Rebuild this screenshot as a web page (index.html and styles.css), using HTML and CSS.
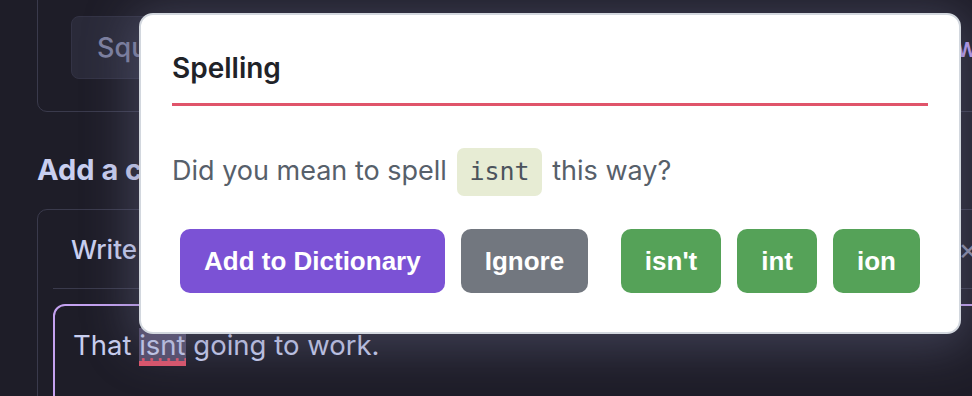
FILE: index.html
```html
<!DOCTYPE html>
<html lang="en">
<head>
<meta charset="utf-8">
<title>Spelling</title>
<link rel="stylesheet" href="styles.css">
</head>
<body>
<div class="page">
  <section class="card card-top">
    <div class="toolbar">
      <button class="ghost-btn">Square</button>
      <span class="link">Preview</span>
    </div>
  </section>
  <h2 class="section-title">Add a comment</h2>
  <section class="card editor">
    <div class="tabs">
      <span class="tab">Write</span>
      <span class="close">×</span>
    </div>
    <div class="textarea">That <span class="misspelled">isnt</span> going to work.</div>
  </section>
</div>

<div class="popup">
  <h3 class="popup-title">Spelling</h3>
  <p class="popup-text">Did you mean to spell <code class="word">isnt</code> this way?</p>
  <div class="actions">
    <div class="group">
      <button class="btn btn-purple">Add to Dictionary</button>
      <button class="btn btn-gray">Ignore</button>
    </div>
    <div class="group">
      <button class="btn btn-green">isn't</button>
      <button class="btn btn-green">int</button>
      <button class="btn btn-green">ion</button>
    </div>
  </div>
</div>
</body>
</html>
```

FILE: styles.css
```css
html, body {
  margin: 0;
  padding: 0;
  overflow: hidden;
}
body {
  background: #1e1d28;
  font-family: Inter, "Noto Sans", sans-serif;
  width: 972px;
  height: 396px;
  position: relative;
}
.page {
  width: 975px;
  padding-left: 37px;
  margin-top: -20px;
}
.card {
  border: 1px solid #3a3a4c;
  border-radius: 10px;
}
.card-top {
  padding: 35px 33px 32px 33px;
}
.toolbar {
  display: flex;
  justify-content: space-between;
  align-items: center;
}
.ghost-btn {
  height: 63px;
  padding: 0 25px;
  background: #2a2a39;
  border: 1px solid #333345;
  border-radius: 8px;
  color: #7d80a0;
  font-family: Inter, sans-serif;
  font-size: 27px;
  font-weight: 500;
}
.link {
  color: #b99cf0;
  font-size: 26px;
  font-weight: 600;
}
.section-title {
  margin: 41px 0 22px 0;
  font-size: 29px;
  line-height: 34px;
  font-weight: 700;
  color: #c9cff0;
}
.editor {
  padding: 0 15px;
  height: 220px;
}
.tabs {
  height: 78px;
  display: flex;
  justify-content: space-between;
  align-items: center;
  padding: 0 18px;
  border-bottom: 1px solid #3a3a4c;
}
.tab {
  color: #c9cff0;
  font-size: 26px;
  font-weight: 500;
}
.close {
  color: #8a8ca6;
  font-size: 30px;
}
.textarea {
  margin-top: 15px;
  height: 140px;
  border: 2px solid #c4a2f0;
  border-radius: 12px;
  padding: 22px 18px;
  color: #c9cff0;
  font-size: 27.5px;
  line-height: 34px;
}
.misspelled {
  position: relative;
  background: #564e6b;
  box-shadow: inset 0 -5px 0 #e0556b;
  padding-bottom: 4px;
}
.misspelled::after {
  content: "";
  position: absolute;
  left: 0;
  right: 0;
  bottom: 5px;
  height: 3px;
  background: radial-gradient(circle, #e0556b 1.3px, transparent 1.6px) 0 0 / 8.5px 3px repeat-x;
}

.popup {
  position: absolute;
  left: 139px;
  top: 13px;
  box-sizing: border-box;
  width: 822px;
  padding: 36px 31px 39px 31px;
  background: #ffffff;
  border: 2px solid #d2d7de;
  border-radius: 14px;
  box-shadow: 0 6px 48px 8px rgba(110, 112, 145, 0.42);
}
.popup-title {
  margin: 0;
  padding-bottom: 18px;
  border-bottom: 3px solid #e0546a;
  font-size: 28px;
  line-height: 34px;
  font-weight: 600;
  color: #1f2328;
}
.popup-text {
  margin: 41px 0 0 0;
  font-size: 27px;
  line-height: 48px;
  color: #57606a;
}
.word {
  display: inline-block;
  padding: 8px 12px;
  margin: 0 3px;
  font-family: "DejaVu Sans Mono", monospace;
  font-size: 25px;
  line-height: 32px;
  background: #e7ecd4;
  border-radius: 7px;
  color: #4b535c;
}
.actions {
  margin-top: 33px;
  display: flex;
  justify-content: space-between;
}
.group {
  display: flex;
}
.btn {
  margin: 0 8px;
  padding: 17px 24px;
  border: none;
  border-radius: 10px;
  font-family: "Liberation Sans", Arial, sans-serif;
  font-size: 26px;
  line-height: 30px;
  font-weight: 700;
  color: #ffffff;
}
.btn-purple { background: #7b52d5; }
.btn-gray { background: #72777f; }
.btn-green { background: #55a258; }
```
